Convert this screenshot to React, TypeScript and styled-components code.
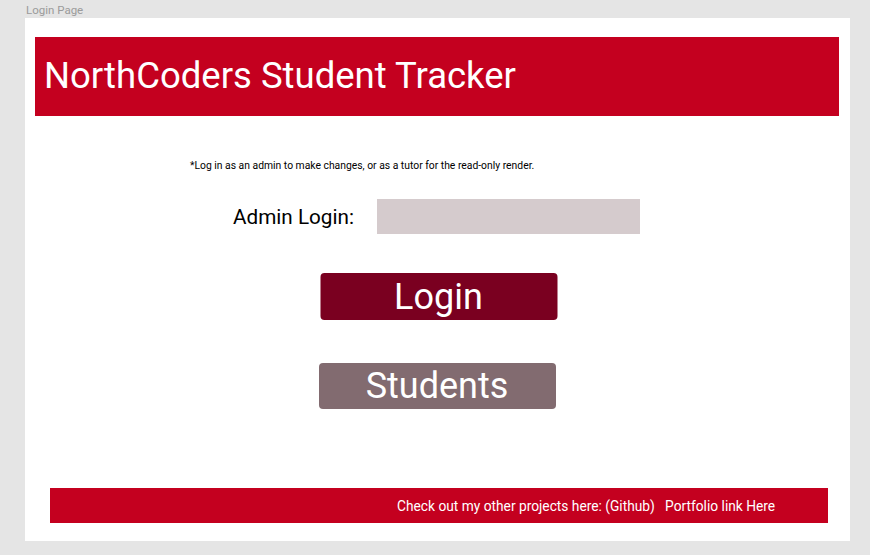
import React from "react";
import styled, { createGlobalStyle } from "styled-components";

const GlobalStyle = createGlobalStyle`
  html, body {
    margin: 0;
    padding: 0;
    background: #e5e5e5;
    font-family: Roboto, "Liberation Sans", Arial, sans-serif;
  }
  * { box-sizing: border-box; }
`;

const Canvas = styled.div`
  width: 870px;
  height: 555px;
  padding: 0 20px 0 25px;
  display: flex;
  flex-direction: column;
`;

const FrameLabel = styled.div`
  height: 18px;
  padding: 4px 0 0 1px;
  font-size: 11.5px;
  line-height: 13px;
  color: #9b9b9b;
`;

const Frame = styled.div`
  width: 825px;
  height: 523px;
  background: #ffffff;
  padding: 19px 11px 18px 10px;
  display: flex;
  flex-direction: column;
`;

const Header = styled.header`
  height: 79px;
  background: #c4001f;
  display: flex;
  align-items: center;
  padding-left: 9px;
`;

const Title = styled.h1`
  margin: 0;
  font-weight: 400;
  font-size: 36.5px;
  color: #ffffff;
  letter-spacing: 0;
  transform: translateY(-1px);
`;

const Main = styled.main`
  flex: 1;
  display: flex;
  flex-direction: column;
  align-items: center;
`;

const Note = styled.p`
  align-self: flex-start;
  margin: 44px 0 0 155px;
  font-size: 10.35px;
  line-height: 12px;
  color: #000000;
`;

const LoginRow = styled.div`
  margin: 27px 1px 0 0;
  display: flex;
  align-items: center;
  gap: 23px;
  height: 35px;
`;

const Label = styled.label`
  font-size: 20.7px;
  color: #000000;
`;

const Input = styled.input`
  width: 263px;
  height: 35px;
  border: none;
  background: #d5cbcd;
  outline: none;
`;

const Button = styled.button<{ $bg: string; $top: number; $h: number; $shift: number }>`
  margin-top: ${(p) => p.$top}px;
  width: 237px;
  height: ${(p) => p.$h}px;
  background: ${(p) => p.$bg};
  border: none;
  border-radius: 4px;
  color: #ffffff;
  font-family: Roboto, "Liberation Sans", Arial, sans-serif;
  font-size: 36px;
  line-height: 1;
  display: flex;
  align-items: center;
  justify-content: center;
  padding: 0;
  transform: translateX(${(p) => p.$shift}px);
`;

const Footer = styled.footer`
  height: 35px;
  margin: 0 11px 0 15px;
  background: #c4001f;
  display: flex;
  align-items: center;
  padding-left: 347px;
  font-size: 13.75px;
  color: #ffffff;
  white-space: pre;
`;

export default function App() {
  return (
    <>
      <GlobalStyle />
      <Canvas>
        <FrameLabel>Login Page</FrameLabel>
        <Frame>
          <Header>
            <Title>NorthCoders Student Tracker</Title>
          </Header>
          <Main>
            <Note>*Log in as an admin to make changes, or as a tutor for the read-only render.</Note>
            <LoginRow>
              <Label htmlFor="admin">Admin Login:</Label>
              <Input id="admin" type="password" />
            </LoginRow>
            <Button $bg="#7a0020" $top={39} $h={47} $shift={1.5}>Login</Button>
            <Button $bg="#826b70" $top={43} $h={46} $shift={0}>Students</Button>
          </Main>
          <Footer>{"Check out my other projects here: (Github)   Portfolio link Here"}</Footer>
        </Frame>
      </Canvas>
    </>
  );
}
